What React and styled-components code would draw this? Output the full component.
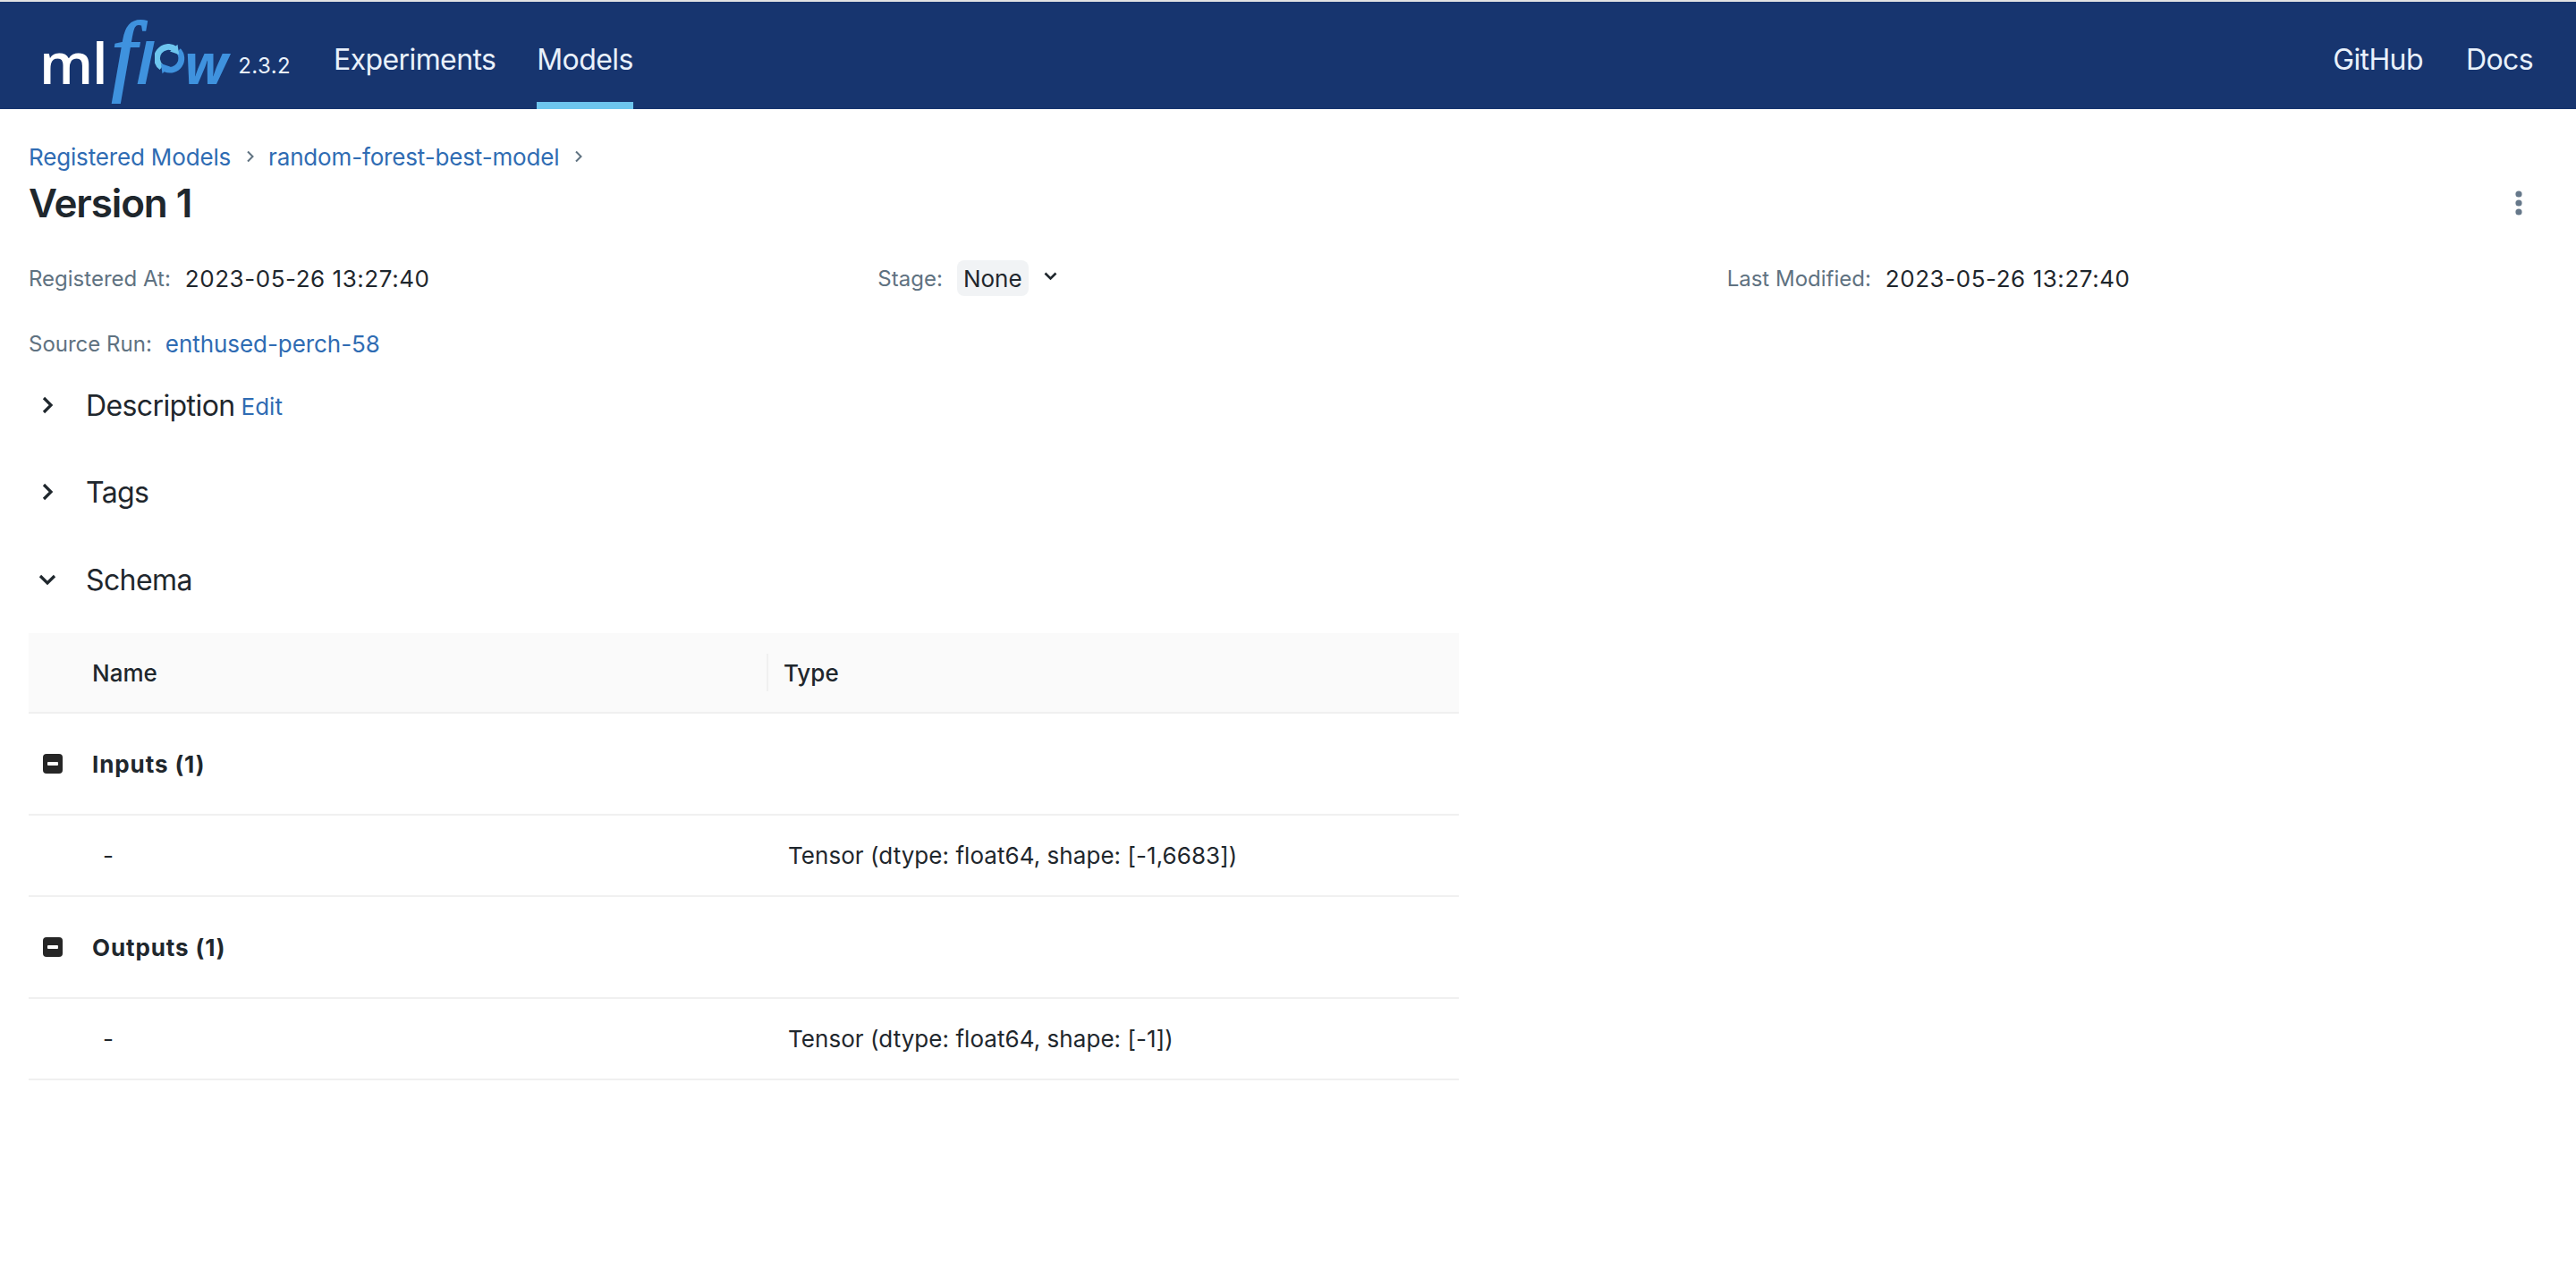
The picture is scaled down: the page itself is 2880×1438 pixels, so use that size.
import React from 'react';
import styled, { createGlobalStyle } from 'styled-components';

const GlobalStyle = createGlobalStyle`
  html, body {
    margin: 0;
    padding: 0;
    background: #fff;
    font-family: Inter, "Liberation Sans", sans-serif;
    color: #1f272d;
  }
  * {
    box-sizing: border-box;
  }
`;

const TopStrip = styled.div`
  height: 2px;
  background: #e3e3e3;
`;

const NavBar = styled.header`
  display: flex;
  align-items: stretch;
  justify-content: space-between;
  height: 120px;
  background: #17356f;
  color: #e9f1fb;
  padding: 0 48px 0 44px;
`;

const NavGroup = styled.nav`
  display: flex;
  align-items: stretch;
  gap: ${(props) => props.$gap}px;
`;

const NavLink = styled.a`
  display: flex;
  align-items: center;
  height: 100%;
  padding-top: 16px;
  font-size: 32px;
  letter-spacing: -0.6px;
  border-bottom: 8px solid ${(props) => (props.$active ? '#6dc5ee' : 'transparent')};
`;

const Brand = styled.div`
  display: flex;
  align-items: flex-end;
  width: 283px;
  padding-bottom: 39px;
`;

const Logo = styled.div`
  display: flex;
  align-items: baseline;
  height: 44px;
  line-height: 44px;
  color: #3f92de;
`;

const LogoMl = styled.span`
  font-family: "Open Sans", sans-serif;
  font-size: 63px;
  font-weight: 600;
  letter-spacing: -1px;
  color: #fff;
`;

const LogoF = styled.span`
  font-family: "Liberation Serif", serif;
  font-style: italic;
  font-size: 100px;
  -webkit-text-stroke: 2px #3f92de;
  margin: 0 0 0 5px;
`;

const LogoFlow = styled.span`
  font-family: "Open Sans", sans-serif;
  font-style: italic;
  font-size: 62px;
  font-weight: 700;
`;

const LogoRing = styled.svg`
  width: 34px;
  height: 34px;
  margin: 0 -1px 0 2px;
  align-self: flex-end;
`;

const Version = styled.span`
  font-size: 24px;
  margin: 0 2px -3px auto;
  letter-spacing: 0.4px;
  line-height: 24px;
`;

const Page = styled.main`
  padding: 0 0 0 32px;
`;

const Breadcrumbs = styled.div`
  display: flex;
  align-items: center;
  height: 32px;
  margin-top: 37px;
  font-size: 26px;
  letter-spacing: -0.16px;
`;

const CrumbLink = styled.a`
  color: #2f6cb3;
`;

const CrumbSep = styled.svg`
  width: 10px;
  height: 14px;
  margin: 0 15px 0 17px;
`;

const TitleRow = styled.div`
  display: flex;
  align-items: center;
  justify-content: space-between;
  height: 56px;
  margin-top: 8px;
  padding-right: 60px;
`;

const Title = styled.h1`
  margin: 0;
  font-size: 44px;
  font-weight: 600;
  letter-spacing: -1.1px;
`;

const MetaGrid = styled.div`
  display: grid;
  grid-template-columns: repeat(3, 1fr);
  margin-top: 36px;
  height: 40px;
  align-items: center;
`;

const MetaItem = styled.div`
  display: flex;
  align-items: center;
  font-size: 26px;
`;

const MetaLabel = styled.span`
  color: #5f7281;
  font-size: 24px;
  margin-right: 16px;
`;

const DateValue = styled.span`
  letter-spacing: 0.55px;
`;

const StageTag = styled.span`
  display: flex;
  align-items: center;
  justify-content: center;
  width: 80px;
  height: 40px;
  background: #f1f3f5;
  border-radius: 8px;
`;

const StageChevron = styled.svg`
  width: 15px;
  height: 10px;
  margin: 0 0 4px 17px;
`;

const SourceRow = styled(MetaItem)`
  height: 40px;
  margin-top: 33px;
`;

const SourceLink = styled(CrumbLink)`
  margin-left: -1px;
  letter-spacing: -0.06px;
`;

const SectionHead = styled.div`
  display: flex;
  align-items: center;
  height: 48px;
  margin-top: ${(props) => props.$top}px;
`;

const ChevronBox = styled.div`
  display: flex;
  align-items: center;
  width: 64px;
  flex: none;
  padding-left: 10px;
`;

const SectionTitle = styled.span`
  font-size: 32px;
  letter-spacing: -0.6px;
`;

const EditLink = styled.a`
  color: #2f6cb3;
  font-size: 26px;
  margin: 3px 0 0 7px;
`;

const Table = styled.div`
  width: 1599px;
  margin-top: 36px;
  font-size: 26px;
`;

const HeaderRow = styled.div`
  display: flex;
  align-items: center;
  height: 90px;
  background: #fafafa;
  border-bottom: 2px solid #f0f0f0;
  font-weight: 500;
`;

const NameHead = styled.div`
  width: 827px;
  height: 42px;
  display: flex;
  align-items: center;
  padding-left: 71px;
  border-right: 2px solid #f0f0f0;
`;

const TypeHead = styled.div`
  padding-left: 17px;
`;

const GroupRow = styled.div`
  display: flex;
  align-items: center;
  height: ${(props) => props.$height}px;
  border-bottom: 2px solid #f0f0f0;
  font-weight: 700;
  letter-spacing: 0.9px;
`;

const Collapse = styled.div`
  position: relative;
  width: 22px;
  height: 22px;
  margin: 0 33px 0 16px;
  border-radius: 4px;
  background: #262626;
  &::after {
    content: '';
    position: absolute;
    left: 5px;
    right: 5px;
    top: 9px;
    height: 4px;
    border-radius: 1px;
    background: #fff;
  }
`;

const FieldRow = styled.div`
  display: flex;
  align-items: center;
  height: 91px;
  border-bottom: 2px solid #f0f0f0;
`;

const FieldName = styled.div`
  width: 849px;
  padding-left: 83px;
`;

const FieldType = styled.div`
  letter-spacing: 0.05px;
`;

function Chevron({ down }) {
  return (
    <svg width="22" height="22" viewBox="0 0 22 22" fill="none">
      <path
        d={down ? 'M3 7l8 8 8-8' : 'M7 3l8 8-8 8'}
        stroke="#1f272d"
        strokeWidth="3.2"
      />
    </svg>
  );
}

function Schema({ title, type }) {
  return (
    <>
      <GroupRow $height={114}>
        <Collapse />
        {title}
      </GroupRow>
      <FieldRow>
        <FieldName>-</FieldName>
        <FieldType>{type}</FieldType>
      </FieldRow>
    </>
  );
}

export default function App() {
  return (
    <>
      <GlobalStyle />
      <TopStrip />
      <NavBar>
        <NavGroup $gap={46}>
          <Brand>
            <Logo>
              <LogoMl>ml</LogoMl>
              <LogoF>f</LogoF>
              <LogoFlow>l</LogoFlow>
              <LogoRing viewBox="0 0 38 40" fill="none">
                <path d="M8 31A15 15 0 0 1 26 7" stroke="#6dc5ee" strokeWidth="8" />
                <path d="M30 9A15 15 0 0 1 13 33" stroke="#3f92de" strokeWidth="8" />
                <path d="M29 1l2 13-12-4z" fill="#6dc5ee" />
                <path d="M9 39l-2-13 12 4z" fill="#3f92de" />
              </LogoRing>
              <LogoFlow>w</LogoFlow>
            </Logo>
            <Version>2.3.2</Version>
          </Brand>
          <NavLink>Experiments</NavLink>
          <NavLink $active>Models</NavLink>
        </NavGroup>
        <NavGroup $gap={48}>
          <NavLink>GitHub</NavLink>
          <NavLink>Docs</NavLink>
        </NavGroup>
      </NavBar>
      <Page>
        <Breadcrumbs>
          <CrumbLink>Registered Models</CrumbLink>
          <CrumbSep viewBox="0 0 10 14" fill="none">
            <path d="M2 1.5l5.5 5.5L2 12.5" stroke="#5f7281" strokeWidth="2" />
          </CrumbSep>
          <CrumbLink>random-forest-best-model</CrumbLink>
          <CrumbSep viewBox="0 0 10 14" fill="none">
            <path d="M2 1.5l5.5 5.5L2 12.5" stroke="#5f7281" strokeWidth="2" />
          </CrumbSep>
        </Breadcrumbs>
        <TitleRow>
          <Title>Version 1</Title>
          <svg width="8" height="28" viewBox="0 0 8 28" fill="#66788a">
            <circle cx="4" cy="4" r="3.6" />
            <circle cx="4" cy="14" r="3.6" />
            <circle cx="4" cy="24" r="3.6" />
          </svg>
        </TitleRow>
        <MetaGrid>
          <MetaItem>
            <MetaLabel>Registered At:</MetaLabel>
            <DateValue>2023-05-26 13:27:40</DateValue>
          </MetaItem>
          <MetaItem>
            <MetaLabel>Stage:</MetaLabel>
            <StageTag>None</StageTag>
            <StageChevron viewBox="0 0 15 10" fill="none">
              <path d="M1.5 1.5l6 6 6-6" stroke="#1f272d" strokeWidth="2.6" />
            </StageChevron>
          </MetaItem>
          <MetaItem>
            <MetaLabel>Last Modified:</MetaLabel>
            <DateValue>2023-05-26 13:27:40</DateValue>
          </MetaItem>
        </MetaGrid>
        <SourceRow>
          <MetaLabel>Source Run:</MetaLabel>
          <SourceLink>enthused-perch-58</SourceLink>
        </SourceRow>
        <SectionHead $top={25}>
          <ChevronBox>
            <Chevron />
          </ChevronBox>
          <SectionTitle>Description</SectionTitle>
          <EditLink>Edit</EditLink>
        </SectionHead>
        <SectionHead $top={49}>
          <ChevronBox>
            <Chevron />
          </ChevronBox>
          <SectionTitle>Tags</SectionTitle>
        </SectionHead>
        <SectionHead $top={50}>
          <ChevronBox>
            <Chevron down />
          </ChevronBox>
          <SectionTitle>Schema</SectionTitle>
        </SectionHead>
        <Table>
          <HeaderRow>
            <NameHead>Name</NameHead>
            <TypeHead>Type</TypeHead>
          </HeaderRow>
          <Schema title="Inputs (1)" type="Tensor (dtype: float64, shape: [-1,6683])" />
          <Schema title="Outputs (1)" type="Tensor (dtype: float64, shape: [-1])" />
        </Table>
      </Page>
    </>
  );
}
